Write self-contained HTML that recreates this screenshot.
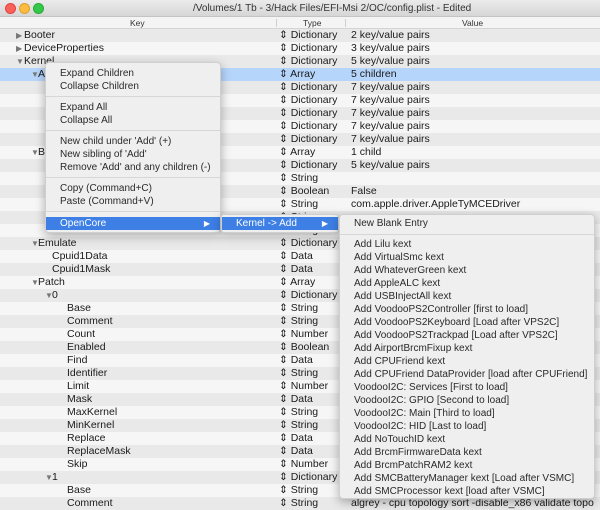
<!DOCTYPE html>
<html><head><meta charset="utf-8"><style>
*{margin:0;padding:0;box-sizing:border-box}
body{width:600px;height:506px;overflow:hidden;background:#f6f6f6;font-family:"Liberation Sans",sans-serif;font-size:10.5px;color:#1a1a1a;position:relative}
.title{position:absolute;left:0;top:0;width:600px;height:17px;background:linear-gradient(#ebebeb,#d6d6d6);border-bottom:1px solid #c4c4c4;font-size:10px;line-height:17px;color:#333}
.title b{font-weight:normal;position:absolute;left:193px;top:0}
.dot{position:absolute;top:3px;width:11px;height:11px;border-radius:50%}
.hdr{position:absolute;left:0;top:17px;width:600px;height:12px;background:#f4f4f4;border-bottom:1px solid #d4d4d4;font-size:8.5px;line-height:12px;color:#333}
.hdr span{position:absolute;top:0}
.hdr i{position:absolute;top:2px;width:1px;height:8px;background:#d0d0d0}
.r{position:absolute;left:0;width:600px;height:13px;line-height:13px;white-space:nowrap}
.r.g{background:#e9e9e9}
.r.sel{background:#b6d5fb}
.r span{position:absolute;top:0}
.t{left:279px}
.v{left:351px}
.tri{font-size:8px;color:#777}
.menu{position:absolute;background:#efefef;border:1px solid #cfcfcf;border-radius:4px;box-shadow:0 3px 10px rgba(0,0,0,.3);color:#2a2a2a;font-size:10px}
.mi{position:absolute;left:0;right:0;height:13px;line-height:13px;white-space:nowrap}
.sep{position:absolute;left:0;right:0;height:1px;background:#d6d6d6}
.hl{background:#3d7fe5;color:#fff}
</style></head><body>
<div class="title"><b>/Volumes/1 Tb - 3/Hack Files/EFI-Msi 2/OC/config.plist - Edited</b>
<div class="dot" style="left:5px;background:#fc605b;border:1px solid #de4640"></div>
<div class="dot" style="left:19px;background:#fdbc40;border:1px solid #dea032"></div>
<div class="dot" style="left:33px;background:#34c84a;border:1px solid #27aa35"></div>
</div>
<div class="hdr"><span style="left:130px">Key</span><i style="left:276px"></i><span style="left:303px">Type</span><i style="left:345px"></i><span style="left:462px">Value</span></div>

<div class="r g" style="top:29px"><span class="tri" style="left:16px">▶</span><span style="left:24px">Booter</span><span class="t">⇕ Dictionary</span><span class="v">2 key/value pairs</span></div>
<div class="r" style="top:42px"><span class="tri" style="left:16px">▶</span><span style="left:24px">DeviceProperties</span><span class="t">⇕ Dictionary</span><span class="v">3 key/value pairs</span></div>
<div class="r g" style="top:55px"><span class="tri" style="left:16px">▼</span><span style="left:24px">Kernel</span><span class="t">⇕ Dictionary</span><span class="v">5 key/value pairs</span></div>
<div class="r sel" style="top:68px"><span class="tri" style="left:31px">▼</span><span style="left:38px">Add</span><span class="t">⇕ Array</span><span class="v">5 children</span></div>
<div class="r g" style="top:81px"><span class="t">⇕ Dictionary</span><span class="v">7 key/value pairs</span></div>
<div class="r" style="top:94px"><span class="t">⇕ Dictionary</span><span class="v">7 key/value pairs</span></div>
<div class="r g" style="top:107px"><span class="t">⇕ Dictionary</span><span class="v">7 key/value pairs</span></div>
<div class="r" style="top:120px"><span class="t">⇕ Dictionary</span><span class="v">7 key/value pairs</span></div>
<div class="r g" style="top:133px"><span class="t">⇕ Dictionary</span><span class="v">7 key/value pairs</span></div>
<div class="r" style="top:146px"><span class="tri" style="left:31px">▼</span><span style="left:38px">Block</span><span class="t">⇕ Array</span><span class="v">1 child</span></div>
<div class="r g" style="top:159px"><span class="t">⇕ Dictionary</span><span class="v">5 key/value pairs</span></div>
<div class="r" style="top:172px"><span class="t">⇕ String</span></div>
<div class="r g" style="top:185px"><span class="t">⇕ Boolean</span><span class="v">False</span></div>
<div class="r" style="top:198px"><span class="t">⇕ String</span><span class="v">com.apple.driver.AppleTyMCEDriver</span></div>
<div class="r g" style="top:211px"><span class="t">⇕ String</span></div>
<div class="r" style="top:224px"><span class="t">⇕ String</span></div>
<div class="r g" style="top:237px"><span class="tri" style="left:31px">▼</span><span style="left:38px">Emulate</span><span class="t">⇕ Dictionary</span></div>
<div class="r" style="top:250px"><span style="left:52px">Cpuid1Data</span><span class="t">⇕ Data</span></div>
<div class="r g" style="top:263px"><span style="left:52px">Cpuid1Mask</span><span class="t">⇕ Data</span></div>
<div class="r" style="top:276px"><span class="tri" style="left:31px">▼</span><span style="left:38px">Patch</span><span class="t">⇕ Array</span></div>
<div class="r g" style="top:289px"><span class="tri" style="left:45px">▼</span><span style="left:52px">0</span><span class="t">⇕ Dictionary</span></div>
<div class="r" style="top:302px"><span style="left:67px">Base</span><span class="t">⇕ String</span></div>
<div class="r g" style="top:315px"><span style="left:67px">Comment</span><span class="t">⇕ String</span></div>
<div class="r" style="top:328px"><span style="left:67px">Count</span><span class="t">⇕ Number</span></div>
<div class="r g" style="top:341px"><span style="left:67px">Enabled</span><span class="t">⇕ Boolean</span></div>
<div class="r" style="top:354px"><span style="left:67px">Find</span><span class="t">⇕ Data</span></div>
<div class="r g" style="top:367px"><span style="left:67px">Identifier</span><span class="t">⇕ String</span></div>
<div class="r" style="top:380px"><span style="left:67px">Limit</span><span class="t">⇕ Number</span></div>
<div class="r g" style="top:393px"><span style="left:67px">Mask</span><span class="t">⇕ Data</span></div>
<div class="r" style="top:406px"><span style="left:67px">MaxKernel</span><span class="t">⇕ String</span></div>
<div class="r g" style="top:419px"><span style="left:67px">MinKernel</span><span class="t">⇕ String</span></div>
<div class="r" style="top:432px"><span style="left:67px">Replace</span><span class="t">⇕ Data</span></div>
<div class="r g" style="top:445px"><span style="left:67px">ReplaceMask</span><span class="t">⇕ Data</span></div>
<div class="r" style="top:458px"><span style="left:67px">Skip</span><span class="t">⇕ Number</span></div>
<div class="r g" style="top:471px"><span class="tri" style="left:45px">▼</span><span style="left:52px">1</span><span class="t">⇕ Dictionary</span></div>
<div class="r" style="top:484px"><span style="left:67px">Base</span><span class="t">⇕ String</span></div>
<div class="r g" style="top:497px"><span style="left:67px">Comment</span><span class="t">⇕ String</span><span class="v">algrey - cpu topology sort -disable_x86 validate topo</span></div>

<div class="menu" style="left:45px;top:62px;width:176px;height:171px">
<div class="mi" style="top:4px;padding-left:14px">Expand Children</div>
<div class="mi" style="top:17px;padding-left:14px">Collapse Children</div>
<div class="sep" style="top:33px"></div>
<div class="mi" style="top:38px;padding-left:14px">Expand All</div>
<div class="mi" style="top:51px;padding-left:14px">Collapse All</div>
<div class="sep" style="top:67px"></div>
<div class="mi" style="top:72px;padding-left:14px">New child under 'Add' (+)</div>
<div class="mi" style="top:85px;padding-left:14px">New sibling of 'Add'</div>
<div class="mi" style="top:98px;padding-left:14px">Remove 'Add' and any children (-)</div>
<div class="sep" style="top:114px"></div>
<div class="mi" style="top:119px;padding-left:14px">Copy (Command+C)</div>
<div class="mi" style="top:132px;padding-left:14px">Paste (Command+V)</div>
<div class="sep" style="top:148px"></div>
<div class="mi hl" style="top:154px;padding-left:14px">OpenCore<span style="position:absolute;right:10px;font-size:8px">▶</span></div>
</div>
<div class="menu" style="left:221px;top:214px;width:118px;height:19px;border-radius:3px">
<div class="mi hl" style="top:2px;padding-left:14px">Kernel -&gt; Add<span style="position:absolute;right:10px;font-size:8px">▶</span></div>
</div>
<div class="menu" style="left:339px;top:214px;width:256px;height:285px">
<div class="mi" style="top:2px;padding-left:14px">New Blank Entry</div>
<div class="sep" style="top:19px"></div>
<div class="mi" style="top:23px;padding-left:14px">Add Lilu kext</div>
<div class="mi" style="top:36px;padding-left:14px">Add VirtualSmc kext</div>
<div class="mi" style="top:49px;padding-left:14px">Add WhateverGreen kext</div>
<div class="mi" style="top:62px;padding-left:14px">Add AppleALC kext</div>
<div class="mi" style="top:75px;padding-left:14px">Add USBInjectAll kext</div>
<div class="mi" style="top:88px;padding-left:14px">Add VoodooPS2Controller [first to load]</div>
<div class="mi" style="top:101px;padding-left:14px">Add VoodooPS2Keyboard [Load after VPS2C]</div>
<div class="mi" style="top:114px;padding-left:14px">Add VoodooPS2Trackpad [Load after VPS2C]</div>
<div class="mi" style="top:127px;padding-left:14px">Add AirportBrcmFixup kext</div>
<div class="mi" style="top:140px;padding-left:14px">Add CPUFriend kext</div>
<div class="mi" style="top:153px;padding-left:14px">Add CPUFriend DataProvider [load after CPUFriend]</div>
<div class="mi" style="top:166px;padding-left:14px">VoodooI2C: Services [First to load]</div>
<div class="mi" style="top:179px;padding-left:14px">VoodooI2C: GPIO [Second to load]</div>
<div class="mi" style="top:192px;padding-left:14px">VoodooI2C: Main [Third to load]</div>
<div class="mi" style="top:205px;padding-left:14px">VoodooI2C: HID [Last to load]</div>
<div class="mi" style="top:218px;padding-left:14px">Add NoTouchID kext</div>
<div class="mi" style="top:231px;padding-left:14px">Add BrcmFirmwareData kext</div>
<div class="mi" style="top:244px;padding-left:14px">Add BrcmPatchRAM2 kext</div>
<div class="mi" style="top:257px;padding-left:14px">Add SMCBatteryManager kext [Load after VSMC]</div>
<div class="mi" style="top:270px;padding-left:14px">Add SMCProcessor kext [load after VSMC]</div>
</div>
</body></html>
